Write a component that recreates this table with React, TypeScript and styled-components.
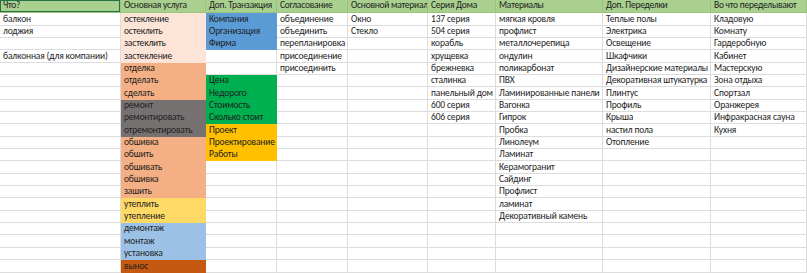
import React from 'react';
import styled, { createGlobalStyle } from 'styled-components';

const GlobalStyle = createGlobalStyle`
  html, body {
    margin: 0;
    padding: 0;
    background: #fff;
  }
`

const GRID = '#dcdcdc';

const Sheet = styled.div`
  display: grid;
  grid-template-columns: 121px 85px 71px 71px 80px 68px 107px 108px 96px;
  grid-template-rows: 13.3px repeat(21, 12.35px);
  grid-auto-flow: column;
  width: 807px;
  height: 273px;
  overflow: hidden;
  font-family: Carlito, Lato, 'Liberation Sans', sans-serif;
  font-size: 9.5px;
  letter-spacing: -0.15px;
  color: #1e1e1e;
  background: #fff;
`

const HeaderCell = styled.div<{ $active?: boolean }>`
  display: flex;
  align-items: flex-end;
  padding: 0 0 1px 3px;
  background: #a9d08e;
  border-right: 1px solid #9cc27f;
  border-bottom: 1px solid #9cc27f;
  white-space: nowrap;
  overflow: hidden;
  box-sizing: border-box;
  line-height: 11px;
  letter-spacing: -0.25px;
  box-shadow: ${p => (p.$active ? 'inset 0 0 0 1px #217346' : 'none')};
`

const Cell = styled.div<{ $fill?: string }>`
  display: flex;
  align-items: flex-end;
  padding: 0 0 0 3px;
  background: ${p => p.$fill || '#fff'};
  border-right: 1px solid ${p => p.$fill || GRID};
  border-bottom: 1px solid ${p => p.$fill || GRID};
  white-space: nowrap;
  overflow: visible;
  box-sizing: border-box;
  line-height: 11px;
  position: relative;
`

interface Column {
  title: string;
  values: string[];
  fills?: (string | undefined)[];
}

const PEACH = '#fce4d6';
const ORANGE = '#f4b084';
const GRAY = '#767171';
const YELLOW = '#ffd966';
const SKY = '#9bc2e6';
const RUST = '#c65911';
const BLUE = '#5b9bd5';
const GREEN = '#00b050';
const AMBER = '#ffc000';

const columns: Column[] = [
  {
    title: 'Что?',
    values: ['балкон', 'лоджия', '', 'балконная (для компании)'],
  },
  {
    title: 'Основная услуга',
    values: [
      'остекление', 'остеклить', 'застеклить', 'застекление', 'отделка', 'отделать', 'сделать',
      'ремонт', 'ремонтировать', 'отремонтировать', 'обшивка', 'обшить', 'обшивать', 'обшивка',
      'зашить', 'утеплить', 'утепление', 'демонтаж', 'монтаж', 'установка', 'вынос',
    ],
    fills: [
      PEACH, PEACH, PEACH, PEACH, ORANGE, ORANGE, ORANGE, GRAY, GRAY, GRAY,
      ORANGE, ORANGE, ORANGE, ORANGE, ORANGE, YELLOW, YELLOW, SKY, SKY, SKY, RUST,
    ],
  },
  {
    title: 'Доп. Транзакция',
    values: [
      'Компания', 'Организация', 'Фирма', '', '', 'Цена', 'Недорого', 'Стоимость',
      'Сколько стоит', 'Проект', 'Проектирование', 'Работы',
    ],
    fills: [
      BLUE, BLUE, BLUE, undefined, undefined, GREEN, GREEN, GREEN, GREEN, AMBER, AMBER, AMBER,
    ],
  },
  {
    title: 'Согласование',
    values: ['объединение', 'объединить', 'перепланировка', 'присоединение', 'присоединить'],
  },
  {
    title: 'Основной материал',
    values: ['Окно', 'Стекло'],
  },
  {
    title: 'Серия Дома',
    values: [
      '137 серия', '504 серия', 'корабль', 'хрущевка', 'брежневка', 'сталинка',
      'панельный дом', '600 серия', '606 серия',
    ],
  },
  {
    title: 'Материалы',
    values: [
      'мягкая кровля', 'профлист', 'металлочерепица', 'ондулин', 'поликарбонат', 'ПВХ',
      'Ламинированные панели', 'Вагонка', 'Гипрок', 'Пробка', 'Линолеум', 'Ламинат',
      'Керамогранит', 'Сайдинг', 'Профлист', 'ламинат', 'Декоративный камень',
    ],
  },
  {
    title: 'Доп. Переделки',
    values: [
      'Теплые полы', 'Электрика', 'Освещение', 'Шкафчики', 'Дизайнерские материалы',
      'Декоративная штукатурка', 'Плинтус', 'Профиль', 'Крыша', 'настил пола', 'Отопление',
    ],
  },
  {
    title: 'Во что переделывают',
    values: [
      'Кладовую', 'Комнату', 'Гардеробную', 'Кабинет', 'Мастерскую', 'Зона отдыха',
      'Спортзал', 'Оранжерея', 'Инфракрасная сауна', 'Кухня',
    ],
  },
];

const ROWS = 21;

export default function App() {
  return (
    <>
      <GlobalStyle />
      <Sheet>
        {columns.map((col, c) => (
          <React.Fragment key={col.title}>
            <HeaderCell $active={c === 0}>{col.title}</HeaderCell>
            {Array.from({ length: ROWS }, (_, r) => (
              <Cell key={r} $fill={col.fills?.[r]}>
                {col.values[r] || ''}
              </Cell>
            ))}
          </React.Fragment>
        ))}
      </Sheet>
    </>
  );
}
